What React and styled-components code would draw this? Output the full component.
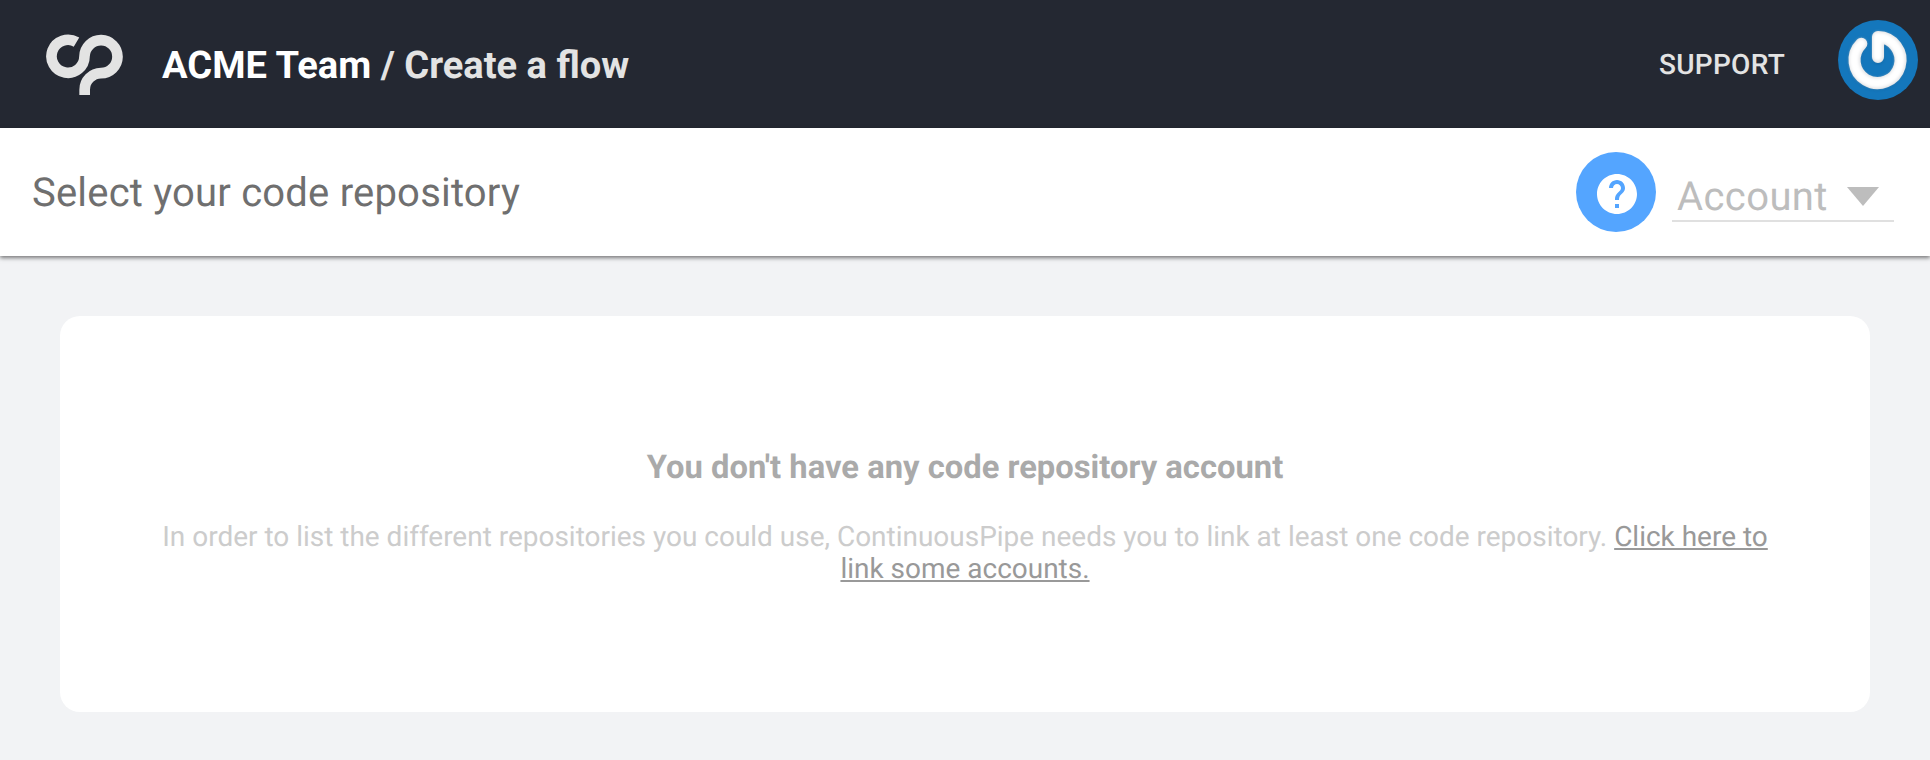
import React from 'react';
import styled, { createGlobalStyle } from 'styled-components';
import { MdHelp } from 'react-icons/md';

const GlobalStyle = createGlobalStyle`
  *, *::before, *::after { box-sizing: border-box; }
  body {
    margin: 0;
    background: #f2f3f5;
    font-family: Roboto, 'Liberation Sans', sans-serif;
    -webkit-font-smoothing: antialiased;
    text-rendering: geometricPrecision;
  }
`;

const Page = styled.div`
  display: flex;
  flex-direction: column;
  height: 760px;
  overflow: hidden;
`;

const Header = styled.header`
  display: flex;
  flex: none;
  align-items: center;
  height: 128px;
  padding: 0 12px 0 44px;
  background: #242832;
  color: #e3e3e3;
`;

const Logo = styled.svg`
  width: 82px;
  height: 64px;
  margin-right: 36px;
`;

const Breadcrumb = styled.h1`
  flex: 1;
  margin: 4px 0 0;
  font-size: 38.1px;
  line-height: 48px;
  font-weight: 700;
  white-space: pre;
`;

const TeamName = styled.span`
  color: #fff;
`;

const SupportLink = styled.a`
  margin: 2px 53px 0 0;
  font-size: 28px;
  line-height: 36px;
  font-weight: 500;
  letter-spacing: 0.28px;
  text-transform: uppercase;
`;

const Avatar = styled.svg`
  width: 80px;
  height: 80px;
  margin-bottom: 8px;
  border-radius: 50%;
  background: #1477bc;
`;

const Toolbar = styled.div`
  position: relative;
  display: flex;
  align-items: center;
  flex: none;
  height: 128px;
  padding: 0 36px 0 32px;
  background: #fff;
  box-shadow: 0 2px 4px rgba(0, 0, 0, 0.5);
`;

const ToolbarTitle = styled.h2`
  flex: 1;
  margin: 2px 0 0;
  color: #6f6f6f;
  font-size: 40px;
  line-height: 48px;
  font-weight: 400;
  letter-spacing: 0.2px;
`;

const HelpButton = styled.button`
  display: flex;
  align-items: center;
  justify-content: center;
  width: 80px;
  height: 80px;
  margin: 0 16px 0 0;
  padding: 3px 0 0 1px;
  border: 0;
  border-radius: 50%;
  background: #54a5ff;
  color: #fff;
  font-size: 48px;
`;

const AccountSelect = styled.div`
  display: flex;
  align-items: center;
  justify-content: space-between;
  width: 222px;
  height: 52px;
  margin-top: 8px;
  padding: 3px 15px 0 5px;
  border-bottom: 2px solid #e0e0e0;
  color: #bdbdbd;
  font-size: 40px;
  line-height: 48px;
  letter-spacing: 0.4px;
`;

const Caret = styled.span`
  border: 16px solid transparent;
  border-top: 19px solid currentColor;
  border-bottom: 0;
`;

const Content = styled.main`
  padding: 60px;
`;

const Card = styled.section`
  display: flex;
  flex-direction: column;
  align-items: center;
  height: 396px;
  padding: 132px 100px 0;
  border-radius: 20px;
  background: #fff;
  text-align: center;
`;

const CardTitle = styled.h3`
  margin: 0 0 35px;
  color: #aaa;
  font-size: 32.76px;
  line-height: 38px;
  font-weight: 700;
`;

const CardText = styled.p`
  margin: 0;
  color: #ccc;
  font-size: 27.98px;
  line-height: 32px;
`;

const CardLink = styled.a`
  color: #999;
  text-decoration: underline;
  text-decoration-thickness: 2px;
  text-underline-offset: 2px;
`;

export default function App() {
  return (
    <>
      <GlobalStyle />
      <Page>
        <Header>
          <Logo viewBox="42 36 246 192" aria-label="ContinuousPipe">
            <path
              d="M139.500 66.500A49.500 49.500 0 1 0 163.500 109A49.500 49.500 0 1 1 213 159.500A49.500 49.500 0 0 0 164 209V225"
              fill="none"
              stroke="#e3e3e3"
              strokeWidth="32"
            />
          </Logo>
          <Breadcrumb>
            <TeamName>ACME Team</TeamName> / Create a flow
          </Breadcrumb>
          <SupportLink>Support</SupportLink>
          <Avatar viewBox="0 0 240 240" aria-label="Profile">
            <defs>
              <filter id="soft" x="-20%" y="-20%" width="140%" height="140%">
                <feGaussianBlur stdDeviation="4" />
              </filter>
            </defs>
            <g fill="none" strokeLinecap="round" strokeLinejoin="round">
              <path
                d="M120 113V53A69 69 0 1 1 70 72"
                stroke="#07548f"
                strokeOpacity="0.6"
                strokeWidth="36"
                filter="url(#soft)"
              />
              <path d="M120 111V51A69 69 0 1 1 70 71" stroke="#e2e3e5" strokeWidth="36" />
              <path
                d="M119 109V51A69 69 0 1 1 70 70"
                stroke="#fff"
                strokeWidth="28"
                filter="url(#soft)"
              />
            </g>
          </Avatar>
        </Header>
        <Toolbar>
          <ToolbarTitle>Select your code repository</ToolbarTitle>
          <HelpButton aria-label="Help">
            <MdHelp />
          </HelpButton>
          <AccountSelect>
            Account
            <Caret />
          </AccountSelect>
        </Toolbar>
        <Content>
          <Card>
            <CardTitle>You don't have any code repository account</CardTitle>
            <CardText>
              In order to list the different repositories you could use, ContinuousPipe needs you to
              link at least one code repository. <CardLink>Click here to link some accounts.</CardLink>
            </CardText>
          </Card>
        </Content>
      </Page>
    </>
  );
}
